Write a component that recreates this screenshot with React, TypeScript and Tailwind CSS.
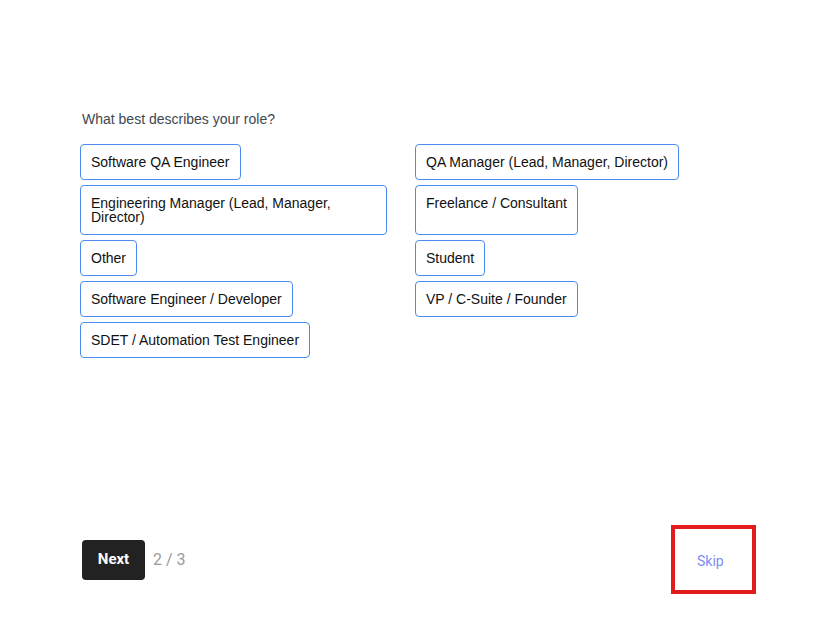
import React from "react";

const left = [
  "Software QA Engineer",
  "Engineering Manager (Lead, Manager, Director)",
  "Other",
  "Software Engineer / Developer",
  "SDET / Automation Test Engineer",
];
const right = [
  "QA Manager (Lead, Manager, Director)",
  "Freelance / Consultant",
  "Student",
  "VP / C-Suite / Founder",
];

function Option({ label }: { label: string }) {
  return (
    <div
      role="button"
      className="cursor-pointer text-left border border-[#4d8bf0] rounded-[4px] bg-white px-[10px] py-[10px] text-[14px] leading-[14px] text-[#111] [font-family:'Liberation_Sans',Arial,sans-serif]"
    >
      {label}
    </div>
  );
}

export default function App() {
  const items: string[] = [];
  for (let i = 0; i < left.length; i++) {
    items.push(left[i]);
    if (right[i]) items.push(right[i]);
  }
  return (
    <div className="h-[640px] w-full bg-white flex flex-col [font-family:'Liberation_Sans',Arial,sans-serif]">
      <div className="pl-[82px] pt-[111px] text-[14px] leading-[16px] text-[#3d4853]">
        What best describes your role?
      </div>
      <div className="mt-[17px] pl-[80px] grid grid-cols-[307px_307px] gap-x-[28px] gap-y-[5px] justify-items-start">
        {items.map((l) => (
          <Option key={l} label={l} />
        ))}
      </div>
      <div className="mt-auto flex items-center justify-between pl-[82px] pr-[78px] pb-[46px]">
        <div className="flex items-center gap-[8px] [font-family:Roboto,sans-serif]">
          <button className="h-[40px] w-[63px] rounded-[4px] bg-[#222222] text-white font-bold text-[15px]">
            Next
          </button>
          <span className="text-[16px] text-[#9a9a9a]">2 / 3</span>
        </div>
        <div className="w-[85px] h-[69px] border-[4px] border-[#e21c1c] flex items-center pl-[22px] pt-[4px]">
          <span className="text-[14px] text-[#7b8ef2] [font-family:Roboto,sans-serif]">Skip</span>
        </div>
      </div>
    </div>
  );
}
